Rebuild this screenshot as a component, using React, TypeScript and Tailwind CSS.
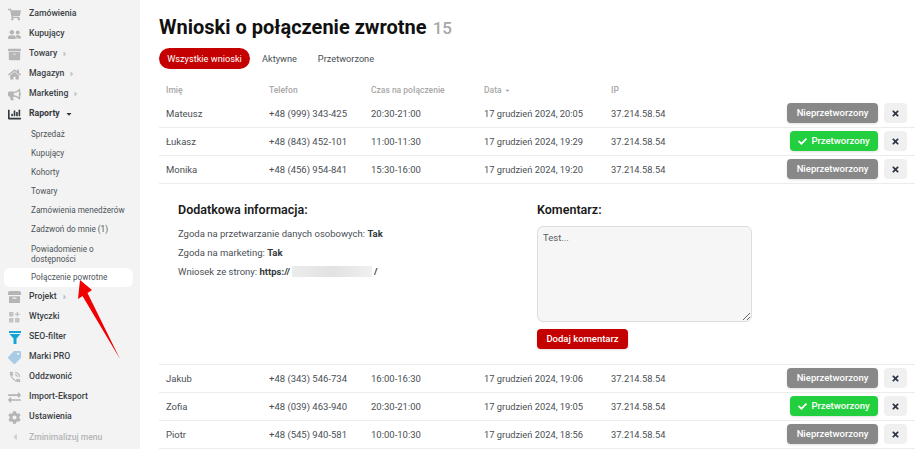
import React from "react";
import { FaShoppingCart, FaUserFriends, FaArchive, FaHome, FaBullhorn, FaChartBar, FaTag, FaExchangeAlt, FaCog, FaCaretLeft, FaCaretRight, FaCaretDown, FaCheck, FaTimes } from "react-icons/fa";
import { MdPhoneInTalk } from "react-icons/md";

type Nav = { label: string; icon: React.ReactNode; caret?: boolean };

function NavItem({ label, icon, caret }: Nav) {
  return (
    <div className="flex h-5 items-center text-[8.7px]">
      <span className="flex w-[29px] justify-center">{icon}</span>
      <span className="font-medium text-[#3a3f45]">{label}</span>
      {caret && <FaCaretRight className="ml-1 text-[8px] text-[#c4c4c4]" />}
    </div>
  );
}

function Sub({ children, active, tall, first }: { children: React.ReactNode; active?: boolean; tall?: boolean; first?: boolean }) {
  return (
    <div className={`ml-1 mr-[7px] flex items-center rounded-md pl-[27px] pr-1 text-[8.2px] text-[#4d5359] ${tall ? "h-[29px] leading-[10px]" : first ? "h-5" : "h-[19px]"} ${active ? "bg-white" : ""}`}>
      <span>{children}</span>
    </div>
  );
}

type RowData = [string, string, string, string, boolean];

function Row({ d }: { d: RowData }) {
  return (
    <div className="flex h-7 items-center border-b border-[#ececec] pt-[1px] text-[#4a4f55]">
      <span className="w-[110px] pl-[7px]">{d[0]}</span>
      <span className="w-[102px]">{d[1]}</span>
      <span className="w-[113px]">{d[2]}</span>
      <span className="w-[127px] text-[9.3px]">{d[3]}</span>
      <span className="w-[100px] text-[9.3px]">37.214.58.54</span>
      <div className="ml-auto mb-[2px] flex items-center gap-[6px] pr-[8px]">
        {d[4] ? (
          <span className="flex h-5 w-[88px] items-center justify-center gap-1 rounded bg-[#22cf3f] font-medium text-white shadow-sm">
            <FaCheck className="text-[9px]" />
            Przetworzony
          </span>
        ) : (
          <span className="flex h-5 w-[91px] items-center justify-center rounded bg-[#888888] font-medium text-white shadow-sm">Nieprzetworzony</span>
        )}
        <span className="flex h-5 w-[23px] items-center justify-center rounded bg-[#f0f0f0] text-[#2b3442]">
          <FaTimes className="text-[9px]" />
        </span>
      </div>
    </div>
  );
}

export default function App() {
  const gray = "text-[13px] text-[#b5b5b5]";
  const nav1: Nav[] = [
    { label: "Zamówienia", icon: <FaShoppingCart className={gray} /> },
    { label: "Kupujący", icon: <FaUserFriends className={gray} /> },
    { label: "Towary", icon: <FaArchive className={gray} />, caret: true },
    { label: "Magazyn", icon: <FaHome className={gray} />, caret: true },
    { label: "Marketing", icon: <FaBullhorn className={gray} />, caret: true },
  ];
  const nav2: Nav[] = [
    {
      label: "Wtyczki",
      icon: (
        <svg width="11" height="11" viewBox="0 0 11 11" fill="#c4c4c4">
          <rect x="0" y="0" width="4.5" height="4.5" />
          <rect x="0" y="6" width="4.5" height="4.5" />
          <rect x="6" y="6" width="4.5" height="4.5" />
          <path d="M7.6 0h1.4v1.6h1.6V3H9v1.6H7.6V3H6V1.6h1.6z" />
        </svg>
      ),
    },
    {
      label: "SEO-filter",
      icon: (
        <svg width="12" height="13" viewBox="0 0 12 13" fill="#12a5d6">
          <rect x="0" y="0" width="12" height="2" />
          <path d="M0.5 3h11L7.5 7.5V13h-3V7.5z" />
        </svg>
      ),
    },
    { label: "Marki PRO", icon: <FaTag className="-scale-x-100 text-[13px] text-[#a9cbe6]" /> },
    { label: "Oddzwonić", icon: <MdPhoneInTalk className="text-[14px] text-[#bdbdbd]" /> },
    { label: "Import-Eksport", icon: <FaExchangeAlt className={gray} /> },
    { label: "Ustawienia", icon: <FaCog className={gray} /> },
  ];
  return (
    <div className="relative flex h-[449px] w-[920px] overflow-hidden bg-white font-['Roboto','Noto_Sans',sans-serif] text-[9.5px]">
      <aside className="flex h-full w-[140px] shrink-0 flex-col bg-[#f3f3f3] pt-[4px]">
        {nav1.map((n) => <NavItem key={n.label} {...n} />)}
        <div className="flex h-5 items-center text-[8.7px]">
          <span className="flex w-[29px] justify-center"><FaChartBar className="text-[13px] text-[#33383d]" /></span>
          <span className="font-bold text-[#33383d]">Raporty</span>
          <FaCaretDown className="ml-[5px] text-[8px] text-[#33383d]" />
        </div>
        <Sub first>Sprzedaż</Sub>
        <Sub>Kupujący</Sub>
        <Sub>Kohorty</Sub>
        <Sub>Towary</Sub>
        <Sub>Zamówienia menedżerów</Sub>
        <Sub>Zadzwoń do mnie (1)</Sub>
        <Sub tall>Powiadomienie o dostępności</Sub>
        <Sub active>Połączenie powrotne</Sub>
        <NavItem
          label="Projekt"
          icon={
            <svg width="13" height="12" viewBox="0 0 13 12" fill="#b5b5b5">
              <path d="M2 0h9a2 2 0 0 1 2 2v2H0V2a2 2 0 0 1 2-2z" />
              <path d="M1 5.2h11V12H1zM4.5 6.5v1.2h4V6.5z" fillRule="evenodd" />
            </svg>
          }
          caret
        />
        {nav2.map((n) => <NavItem key={n.label} {...n} />)}
        <div className="flex h-5 items-center text-[8.6px] text-[#b5b5b5]">
          <span className="flex w-[29px] justify-center"><FaCaretLeft className="text-[10px] text-[#cfcfcf]" /></span>
          <span className="font-medium">Zminimalizuj menu</span>
        </div>
      </aside>
      <main className="flex-1 pl-[19px] pr-[5px] pt-[12px]">
        <h1 className="flex h-[28px] items-baseline gap-[6px] text-[20px] font-bold text-[#111]">
          Wnioski o połączenie zwrotne <span className="text-[17px] font-medium text-[#a8a8a8]">15</span>
        </h1>
        <div className="mt-[8px] flex h-[21px] items-center text-[9.2px]">
          <span className="flex h-[21px] w-[91px] items-center justify-center rounded-full bg-[#c40000] text-white">Wszystkie wnioski</span>
          <span className="ml-[12px] text-[#4a4f55]">Aktywne</span>
          <span className="ml-[21px] text-[#4a4f55]">Przetworzone</span>
        </div>
        <div className="mt-[13px] flex h-[18px] items-center pb-[2px] text-[8.5px] font-medium text-[#a8a8a8]">
          <span className="w-[110px] pl-[7px]">Imię</span>
          <span className="w-[102px]">Telefon</span>
          <span className="w-[113px]">Czas na połączenie</span>
          <span className="flex w-[127px] items-center gap-[2px]">Data <FaCaretDown className="text-[7px]" /></span>
          <span className="w-[100px]">IP</span>
        </div>
        <Row d={["Mateusz", "+48 (999) 343-425", "20:30-21:00", "17 grudzień 2024, 20:05", false]} />
        <Row d={["Łukasz", "+48 (843) 452-101", "11:00-11:30", "17 grudzień 2024, 19:29", true]} />
        <Row d={["Monika", "+48 (456) 954-841", "15:30-16:00", "17 grudzień 2024, 19:20", false]} />
        <section className="flex h-[181px] border-b border-[#ececec] pl-[19px] pt-[18px]">
          <div className="w-[359px]">
            <h2 className="text-[12.5px] font-semibold leading-[16px] text-[#1a1a1a]">Dodatkowa informacja:</h2>
            <p className="mt-[6px] leading-[19px] text-[#4a4f55]">Zgoda na przetwarzanie danych osobowych: <b className="text-[#33383d]">Tak</b></p>
            <p className="leading-[19px] text-[#4a4f55]">Zgoda na marketing: <b className="text-[#33383d]">Tak</b></p>
            <p className="flex leading-[19px] text-[#4a4f55]">Wniosek ze strony:&nbsp;<b className="text-[#33383d]">https://</b>
              <span className="my-[4px] ml-[2px] mr-[2px] h-[11px] w-[80px] bg-gradient-to-r from-[#ececec] via-[#e2e2e2] to-[#f0f0f0]" />
              <b className="text-[#33383d]">/</b>
            </p>
          </div>
          <div className="w-[215px]">
            <h2 className="text-[12.5px] font-semibold leading-[16px] text-[#1a1a1a]">Komentarz:</h2>
            <textarea readOnly defaultValue="Test..." className="mt-[8px] block h-[96px] w-[215px] rounded-md border border-[#dedede] bg-[#f6f6f6] px-[5px] py-[4px] text-[9.5px] text-[#5a5f65] outline-none" />
            <button className="mt-[7px] flex h-5 w-[91px] items-center justify-center rounded bg-[#c40000] font-medium text-white shadow-sm">Dodaj komentarz</button>
          </div>
        </section>
        <Row d={["Jakub", "+48 (343) 546-734", "16:00-16:30", "17 grudzień 2024, 19:06", false]} />
        <Row d={["Zofia", "+48 (039) 463-940", "20:30-21:00", "17 grudzień 2024, 19:05", true]} />
        <Row d={["Piotr", "+48 (545) 940-581", "10:00-10:30", "17 grudzień 2024, 18:56", false]} />
      </main>
      <svg className="pointer-events-none absolute left-0 top-0" width="140" height="370" viewBox="0 0 140 370">
        <polygon points="80,280 92,290 87.5,293 120,359 82.5,296 78,299" fill="#f00000" />
      </svg>
    </div>
  );
}
